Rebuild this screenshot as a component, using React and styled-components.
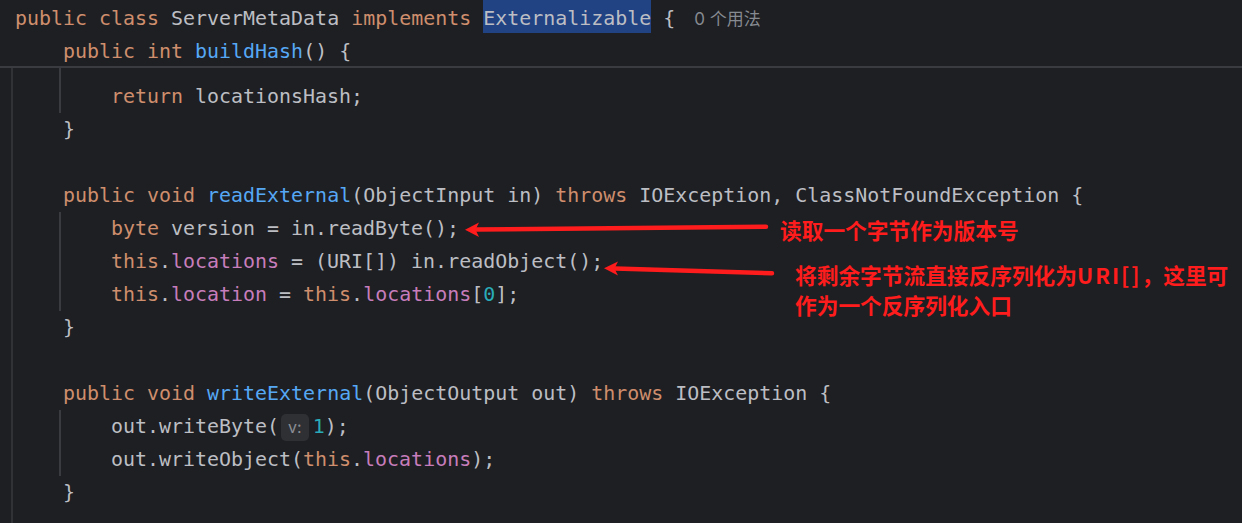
import React from "react";
import styled, { createGlobalStyle } from "styled-components";

const GlobalStyle = createGlobalStyle`
  html, body {
    margin: 0;
    padding: 0;
    background: #1e1f22;
  }
  body {
    overflow: hidden;
  }
`;

const Editor = styled.div`
  position: relative;
  width: 1242px;
  height: 523px;
  display: flex;
  flex-direction: column;
  overflow: hidden;
  background: #1e1f22;
  color: #bcbec4;
  font-family: "DejaVu Sans Mono", "Liberation Mono", monospace;
  font-size: 19.94px;
`;

const StickyHeader = styled.div`
  flex-shrink: 0;
  border-bottom: 2px solid #393b40;
`;

const Viewport = styled.div`
  flex: 1;
  overflow: hidden;
`;

const Scroll = styled.div`
  margin-top: -21.5px;
`;

const ClassBody = styled.div`
  margin-left: 11px;
  border-left: 2px solid #303236;
`;

const MethodBody = styled.div`
  margin-left: 46px;
  border-left: 2px solid #393b40;
`;

const Line = styled.div`
  height: 33px;
  line-height: 33px;
  white-space: pre;
  padding-left: ${(p) => p.$pad ?? 2}px;
`;

// header rows sit a touch lower inside their 33px slot
const HeaderLine = styled(Line)`
  height: 31px;
  padding-top: 2px;
  padding-left: 15px;
`;

const Kw = styled.span`
  color: #cf8e6d;
`;

const Fn = styled.span`
  color: #56a8f5;
`;

const Field = styled.span`
  color: #c77dbb;
`;

const Num = styled.span`
  color: #2aacb8;
`;

const Sel = styled.span`
  display: inline-block;
  height: 33px;
  margin-top: -2px;
  vertical-align: top;
  line-height: 37px;
  background: #214283;
`;

const Usage = styled.span`
  margin-left: 19px;
  font-family: Inter, "Noto Sans CJK SC", sans-serif;
  font-size: 17px;
  color: #868a91;
`;

const Hint = styled.span`
  display: inline-block;
  height: 27px;
  line-height: 27px;
  margin: 0 4px 0 2px;
  padding: 0 7px;
  border-radius: 5px;
  vertical-align: middle;
  background: #2e3034;
  color: #8b8e94;
  font-family: Inter, "Noto Sans", sans-serif;
  font-size: 16px;
`;

const Arrows = styled.svg`
  position: absolute;
  left: 0;
  top: 0;
  pointer-events: none;
`;

const Note = styled.div`
  position: absolute;
  left: ${(p) => p.$x}px;
  top: ${(p) => p.$y}px;
  font-family: "Noto Sans CJK SC", sans-serif;
  font-weight: 700;
  font-size: 21.7px;
  line-height: 30px;
  color: #ff1c1c;
  white-space: pre;
`;

const Latin = styled.span`
  letter-spacing: 2px;
`;

const RED = "#ff1c1c";

export default function App() {
  return (
    <>
      <GlobalStyle />
      <Editor>
        <StickyHeader>
          <HeaderLine>
            <Kw>public</Kw>{" "}<Kw>class</Kw>{" ServerMetaData "}<Kw>implements</Kw>{" "}
            <Sel>Externalizable</Sel>{" {"}<Usage>0 个用法</Usage>
          </HeaderLine>
          <HeaderLine>
            {"    "}<Kw>public</Kw>{" "}<Kw>int</Kw>{" "}<Fn>buildHash</Fn>{"() {"}
          </HeaderLine>
        </StickyHeader>

        <Viewport>
          <Scroll>
            <ClassBody>
              <MethodBody>
                <Line />
                <Line>
                  {"    "}<Kw>return</Kw>{" locationsHash;"}
                </Line>
              </MethodBody>
              <Line>{"    }"}</Line>
              <Line />
              <Line>
                {"    "}<Kw>public</Kw>{" "}<Kw>void</Kw>{" "}<Fn>readExternal</Fn>
                {"(ObjectInput in) "}<Kw>throws</Kw>{" IOException, ClassNotFoundException {"}
              </Line>
              <MethodBody>
                <Line>
                  {"    "}<Kw>byte</Kw>{" version = in.readByte();"}
                </Line>
                <Line>
                  {"    "}<Kw>this</Kw>{"."}<Field>locations</Field>{" = (URI[]) in.readObject();"}
                </Line>
                <Line>
                  {"    "}<Kw>this</Kw>{"."}<Field>location</Field>{" = "}<Kw>this</Kw>{"."}
                  <Field>locations</Field>{"["}<Num>0</Num>{"];"}
                </Line>
              </MethodBody>
              <Line>{"    }"}</Line>
              <Line />
              <Line>
                {"    "}<Kw>public</Kw>{" "}<Kw>void</Kw>{" "}<Fn>writeExternal</Fn>
                {"(ObjectOutput out) "}<Kw>throws</Kw>{" IOException {"}
              </Line>
              <MethodBody>
                <Line>
                  {"    out.writeByte("}<Hint>v:</Hint><Num>1</Num>{");"}
                </Line>
                <Line>
                  {"    out.writeObject("}<Kw>this</Kw>{"."}<Field>locations</Field>{");"}
                </Line>
              </MethodBody>
              <Line>{"    }"}</Line>
              <Line />
              <Line />
            </ClassBody>
          </Scroll>
        </Viewport>

        <Arrows width="1242" height="523" viewBox="0 0 1242 523">
          <line x1="766" y1="226.7" x2="476" y2="229.6" stroke={RED} strokeWidth="4.5" strokeLinecap="round" />
          <polygon points="465,229.8 479,222.5 475.5,229.7 479,237" fill={RED} />
          <line x1="772" y1="273.2" x2="615" y2="268.6" stroke={RED} strokeWidth="4.5" strokeLinecap="round" />
          <polygon points="604,268.3 618,261.5 614.5,268.5 618,275.5" fill={RED} />
        </Arrows>

        <Note $x={780} $y={215}>读取一个字节作为版本号</Note>
        <Note $x={795} $y={260}>
          将剩余字节流直接反序列化为<Latin>URI[]</Latin>，这里可{"\n"}作为一个反序列化入口
        </Note>
      </Editor>
    </>
  );
}
